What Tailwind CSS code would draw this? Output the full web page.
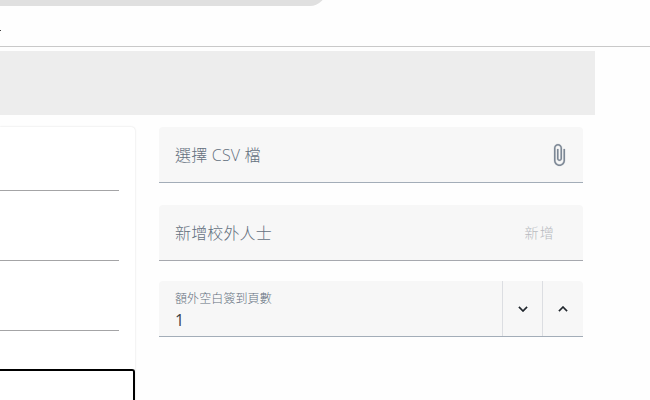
<!DOCTYPE html>
<html lang="zh-Hant">
<head>
<meta charset="utf-8">
<title>簽到表</title>
<script src="https://cdn.jsdelivr.net/npm/@tailwindcss/browser@4"></script>
</head>
<body class="w-[650px] h-[400px] overflow-hidden bg-[#fefefe] font-['Open_Sans','Noto_Sans_CJK_TC',sans-serif] font-light text-[#64707e]">
<header class="h-[47px] border-b border-[#c9c9c9] flex flex-col">
  <div class="h-1.5 overflow-hidden flex items-end">
    <div class="w-[326px] h-8 shrink-0 rounded-br-[16px] bg-[#e0e0e0]"></div>
  </div>
  <div class="mt-6 w-px h-px bg-[#444]"></div>
</header>
<main class="pt-1">
  <div class="w-[595px] h-16 bg-[#ededed]"></div>
  <div class="flex items-start gap-6 pt-3">
    <section class="w-[135px] h-[273px] shrink-0 rounded-tr bg-white shadow-[0_0_2px_rgba(0,0,0,0.16)] flex flex-col *:shrink-0">
      <div class="w-[119px] h-16 border-b border-[#a4a4a6]"></div>
      <div class="w-[119px] h-[70px] border-b border-[#a4a4a6]"></div>
      <div class="w-[119px] h-[70px] border-b border-[#a4a4a6]"></div>
      <div class="mt-[38px] h-[31px] border-t-2 border-r-2 border-black rounded-tr-[3px]"></div>
    </section>
    <section class="w-[424px] flex flex-col">
      <div class="h-14 rounded-t bg-[#f7f7f7] border-b border-[#a3adb8] flex items-center justify-between pl-4 pr-3">
        <span class="text-base leading-6 tracking-[0.2px] whitespace-nowrap">選擇 CSV 檔</span>
        <svg class="size-6 text-[#7d8896]" viewBox="0 0 24 24" fill="currentColor" stroke="currentColor" stroke-width="0.2"><path d="M16.5 6v11.5c0 2.21-1.79 4-4 4s-4-1.79-4-4V5c0-1.38 1.12-2.5 2.5-2.5s2.5 1.12 2.5 2.5v10.5c0 .55-.45 1-1 1s-1-.45-1-1V6H10v9.5c0 1.38 1.12 2.5 2.5 2.5s2.5-1.12 2.5-2.5V5c0-2.21-1.79-4-4-4S7 2.79 7 5v12.5c0 3.04 2.46 5.5 5.5 5.5s5.5-2.46 5.5-5.5V6h-1.5z"/></svg>
      </div>
      <div class="mt-[22px] h-14 rounded-t bg-[#f7f7f7] border-b border-[#a6a8ae] flex items-center justify-between pl-4 pr-7">
        <span class="text-base leading-6 tracking-[0.14px]">新增校外人士</span>
        <button class="text-sm leading-5 tracking-[1.25px] text-[#b6b9be]">新增</button>
      </div>
      <div class="mt-5 h-14 rounded-t bg-[#f7f7f7] border-b border-[#a3adb8] flex">
        <div class="flex-1 pl-4 pt-[9px] flex flex-col">
          <span class="text-xs leading-[18px] tracking-[0.1px]">額外空白簽到頁數</span>
          <span class="text-base leading-6 font-normal text-[#3b4148]">1</span>
        </div>
        <div class="w-10 border-l border-[#dcdee2] flex items-center justify-center">
          <svg class="size-[18px]" viewBox="0 0 24 24" fill="#20262c" stroke="#20262c" stroke-width="0.4"><path d="M7.41 8.58 12 13.17l4.59-4.59L18 10l-6 6-6-6z"/></svg>
        </div>
        <div class="w-[41px] border-l border-[#dcdee2] flex items-center justify-center">
          <svg class="size-[18px]" viewBox="0 0 24 24" fill="#20262c" stroke="#20262c" stroke-width="0.4"><path d="M7.41 15.41 12 10.83l4.59 4.58L18 14l-6-6-6 6z"/></svg>
        </div>
      </div>
    </section>
  </div>
</main>
</body>
</html>
